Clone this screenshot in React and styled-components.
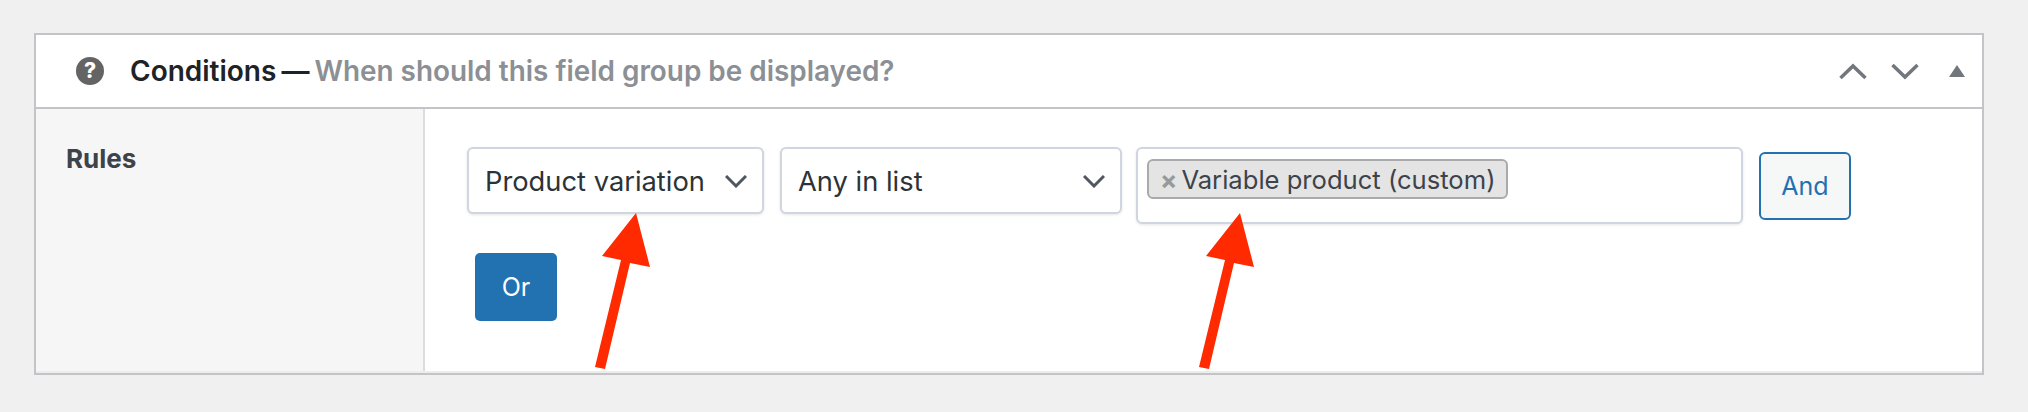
import styled, { createGlobalStyle } from "styled-components";

const GlobalStyle = createGlobalStyle`
  html, body {
    margin: 0;
    padding: 0;
    background: #f0f0f1;
  }
  body {
    font-family: Inter, "Liberation Sans", sans-serif;
    color: #2c3338;
  }
`;

const Page = styled.div`
  position: relative;
  width: 2028px;
  height: 412px;
  padding: 33px 44px 0 34px;
  box-sizing: border-box;
  overflow: hidden;
`;

const Panel = styled.section`
  height: 342px;
  box-sizing: border-box;
  border: 2px solid #c3c4c7;
  background: #fff;
  display: flex;
  flex-direction: column;
`;

const Header = styled.header`
  height: 74px;
  flex: none;
  box-sizing: border-box;
  border-bottom: 2px solid #c3c4c7;
  display: flex;
  align-items: center;
  padding: 0 17px 0 40px;
`;

const Help = styled.span`
  width: 28px;
  height: 28px;
  border-radius: 50%;
  background: #646464;
  color: #fff;
  font-size: 21px;
  font-weight: 800;
  line-height: 28px;
  text-align: center;
  flex: none;
  margin-right: 26px;
`;

const Title = styled.h2`
  margin: 0;
  font-size: 28px;
  font-weight: 600;
  color: #1d2327;
  white-space: nowrap;
  word-spacing: -2px;
`;

const Hint = styled.span`
  color: #8c8f94;
  font-size: 27.9px;
  word-spacing: 0;
`;

const Controls = styled.div`
  margin-left: auto;
  display: flex;
  align-items: center;
  gap: 24px;
  color: #72777d;
`;

const Collapse = styled.svg`
  margin-left: 6px;
`;

const Body = styled.div`
  flex: 1;
  display: flex;
  border-bottom: 2px solid #ededee;
`;

const Side = styled.div`
  width: 357px;
  flex: none;
  background: #f6f6f6;
  border-right: 2px solid #dcdcde;
  padding: 36px 0 0 30px;
  font-size: 26px;
  font-weight: 700;
  line-height: 28px;
  color: #3c434a;
`;

const Main = styled.div`
  flex: 1;
  padding: 38px 0 0 42px;
`;

const Row = styled.div`
  display: flex;
  align-items: flex-start;
`;

const Select = styled.div`
  width: ${(props) => props.$width}px;
  height: 67px;
  margin-right: ${(props) => props.$gap}px;
  box-sizing: border-box;
  border: 2px solid #d0d5e0;
  border-radius: 6px;
  box-shadow: 0 1px 3px rgba(0, 0, 0, 0.1);
  background: #fff;
  display: flex;
  align-items: center;
  justify-content: space-between;
  padding: 2px 15px 0 16px;
  font-size: 27.3px;
  color: #2c3338;
  white-space: nowrap;
`;

const Multi = styled.div`
  width: 607px;
  height: 77px;
  margin-right: 16px;
  box-sizing: border-box;
  border: 2px solid #d0d5e0;
  border-radius: 6px;
  box-shadow: 0 1px 3px rgba(0, 0, 0, 0.1);
  background: #fff;
  padding: 10px 9px;
`;

const Tag = styled.span`
  display: inline-flex;
  align-items: center;
  width: 361px;
  height: 40px;
  box-sizing: border-box;
  border: 2px solid #aaa;
  border-radius: 6px;
  background: #e4e4e4;
  padding: 0 0 0 11px;
  font-size: 25.6px;
  color: #3c434a;
  white-space: nowrap;
`;

const TagClose = styled.span`
  color: #999;
  font-weight: 700;
  margin-right: 4px;
`;

const AndButton = styled.button`
  width: 92px;
  height: 68px;
  margin-top: 5px;
  border: 2px solid #2271b1;
  border-radius: 6px;
  background: #f6f7f7;
  color: #2271b1;
  font: 400 25px Inter, sans-serif;
  padding: 0;
`;

const OrButton = styled.button`
  display: block;
  width: 82px;
  height: 68px;
  margin: 29px 0 0 8px;
  border: none;
  border-radius: 5px;
  background: #2271b1;
  color: #fff;
  font: 400 25px Inter, sans-serif;
  padding: 0;
`;

const Overlay = styled.svg`
  position: absolute;
  left: 0;
  top: 0;
  pointer-events: none;
`;

function Chevron() {
  return (
    <svg width="22" height="13" viewBox="0 0 22 13" fill="none">
      <path d="M1 1 11 11 21 1" stroke="#50575e" strokeWidth="3" />
    </svg>
  );
}

function Arrow({ dx }) {
  return (
    <polygon
      fill="#ff2a00"
      transform={`translate(${dx} 0)`}
      points="636,213 650,267 630,263 605,369 595,367 621,260 602,256"
    />
  );
}

export default function App() {
  return (
    <Page>
      <GlobalStyle />
      <Panel>
        <Header>
          <Help>?</Help>
          <Title>
            Conditions — <Hint>When should this field group be displayed?</Hint>
          </Title>
          <Controls>
            <svg width="28" height="17" viewBox="0 0 28 17" fill="none">
              <path d="M1.5 15 14 3 26.5 15" stroke="#72777d" strokeWidth="3.5" />
            </svg>
            <svg width="28" height="17" viewBox="0 0 28 17" fill="none">
              <path d="M1.5 2 14 14 26.5 2" stroke="#72777d" strokeWidth="3.5" />
            </svg>
            <Collapse width="16" height="17" viewBox="0 0 16 17">
              <path d="M8 2 16 14H0Z" fill="#72777d" />
            </Collapse>
          </Controls>
        </Header>
        <Body>
          <Side>Rules</Side>
          <Main>
            <Row>
              <Select $width={297} $gap={16}>
                Product variation
                <Chevron />
              </Select>
              <Select $width={342} $gap={14}>
                Any in list
                <Chevron />
              </Select>
              <Multi>
                <Tag>
                  <TagClose>×</TagClose>
                  Variable product (custom)
                </Tag>
              </Multi>
              <AndButton>And</AndButton>
            </Row>
            <OrButton>Or</OrButton>
          </Main>
        </Body>
      </Panel>
      <Overlay width="2028" height="412">
        <Arrow dx={0} />
        <Arrow dx={604} />
      </Overlay>
    </Page>
  );
}
